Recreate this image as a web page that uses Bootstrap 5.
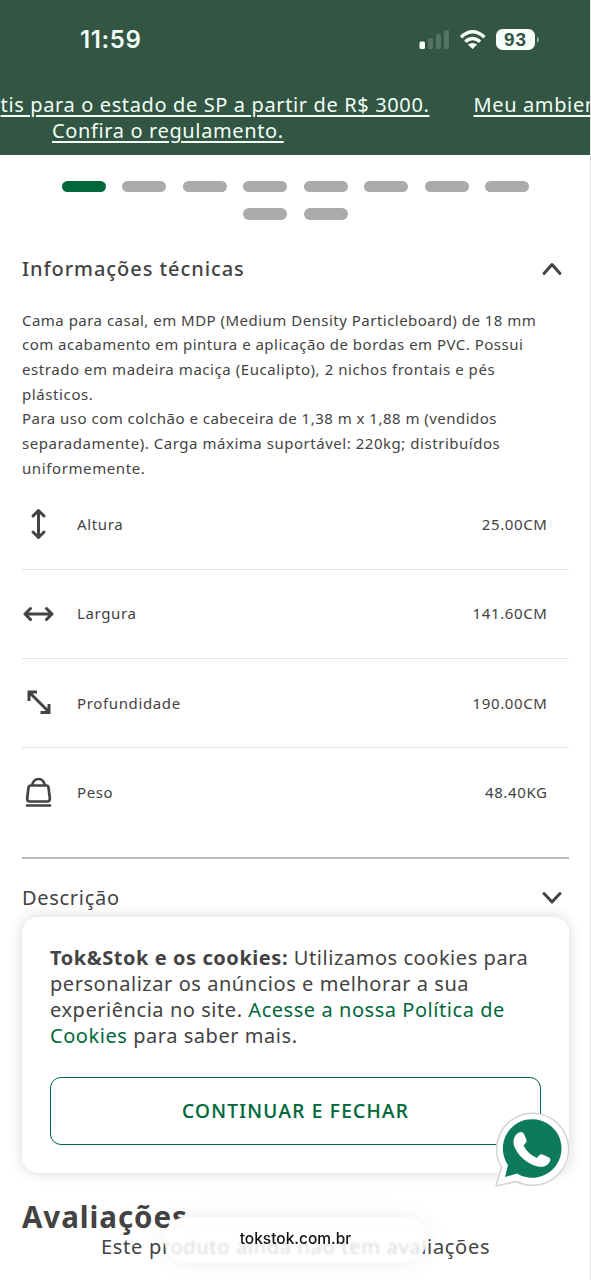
<!DOCTYPE html>
<html lang="pt-BR">
<head>
<meta charset="utf-8">
<meta name="viewport" content="width=device-width, initial-scale=1">
<title>Tok&amp;Stok</title>
<link href="https://cdn.jsdelivr.net/npm/bootstrap@5.3.0/dist/css/bootstrap.min.css" rel="stylesheet">
<style>
:root{--tk-green:#00683a;--tk-ink:#434343}
body{font-family:"Noto Sans","Liberation Sans",sans-serif;color:var(--tk-ink);width:591px;height:1280px;overflow:hidden;background:#fff}
.screen{width:591px;height:1280px;border-right:1px solid #e2e2e2}
.top{height:155px;background:#335543;color:#f1fff6}
.status{height:80px;font-family:Inter,sans-serif}
.status svg{margin-right:51px}
.clock{font-size:24px;font-weight:600;margin-left:80px;line-height:82px;letter-spacing:.6px}
.promo{font-size:20px;line-height:26px;white-space:nowrap}
.promo a{color:inherit;text-decoration:none;letter-spacing:.63px}
.promo .ln{width:max-content;text-decoration:underline;text-underline-offset:3px;text-decoration-thickness:1.5px}
.promo-ship{width:429.500px;flex:none}
.promo-next{margin-left:44px}
.dots{padding:25.5px 54px 0 55px;column-gap:16.45px;row-gap:16px}
.dots i{width:44px;height:11.5px;border-radius:6px;background:#ababab}
.dots i.on{background:var(--tk-green)}
.px{padding-left:22px;padding-right:21px}
.acc{font-size:20px;line-height:30px;padding-right:6px}
.acc-open{margin-top:34px}
.acc-open span{font-weight:500;letter-spacing:.93px}
.acc-closed{border-top:2px solid #bcbcbc;margin-top:20px;padding-top:24px;letter-spacing:.7px}
.body-text{font-size:15px;line-height:24.67px;white-space:nowrap;margin-top:24px;letter-spacing:.48px}
.ls-53{letter-spacing:.53px}
.ls-56{letter-spacing:.56px}
.ls-60{letter-spacing:.6px}
.spec{height:89.3px;border-bottom:1px solid #e3e3e3;font-size:15px;padding-right:21.4px;letter-spacing:.63px}
.spec svg{width:32px;height:32px;margin-right:23px}
.ln{display:block}
.cookie{left:22px;top:917px;width:547px;height:256px;border-radius:16px;background:#fff;box-shadow:0 0 14px rgba(0,0,0,.16);padding:27.5px 28px;z-index:2}
.cookie p{font-size:20px;line-height:26.1px;white-space:nowrap;letter-spacing:.55px}
.cookie a{color:var(--tk-green);text-decoration:none}
.cookie .btn{height:68.5px;border:1.5px solid var(--tk-green);border-radius:11px;color:var(--tk-green);font-size:19px;font-weight:500;margin-top:28px;letter-spacing:1.3px;-webkit-text-stroke:.2px}
.wa{left:494px;top:1110px;z-index:3}
.rate{left:22px;top:1196px;white-space:nowrap}
.rate h2{font-size:29.500px;line-height:42px;letter-spacing:.95px}
.rate p{font-size:20px;line-height:24px;padding-left:79px;letter-spacing:.7px;position:relative;top:-3px}
.pill{left:164px;top:1217px;width:263px;height:45px;border-radius:23px;background:linear-gradient(#fff 0,rgba(255,255,255,.97) 35%,rgba(255,255,255,.82) 60%);box-shadow:0 0 24px rgba(0,0,0,.07);font:500 15.5px/43px Inter,sans-serif;color:#111;z-index:3;backdrop-filter:blur(.8px)}
</style>
</head>
<body>
<div class="screen position-relative overflow-hidden">
<header class="top overflow-hidden">
  <div class="status d-flex align-items-center">
    <div class="clock">11:59</div>
    <svg class="ms-auto" width="120" height="26" viewBox="419 27 120 26">
      <g fill="#f6fff9"><rect x="419.500" y="41.500" width="5.500" height="7.500" rx="1.500"/><g opacity=".18"><rect x="428" y="38" width="5" height="11" rx="1.500"/><rect x="436" y="34" width="5" height="15" rx="1.500"/><rect x="444" y="30" width="5" height="19" rx="1.500"/></g>
      <rect x="496" y="29" width="39" height="21" rx="6.500"/><path d="M537 36.500q3.500 3 0 6.500z" opacity=".6"/><path d="M472.500 49l-4.700-4.400q4.700-3.400 9.400 0z"/></g>
      <g fill="none" stroke="#f6fff9" stroke-width="3.400"><path d="M461 37.200q11.500-10.800 23.500 0"/><path d="M465.300 41.700q7.200-6.500 14.800 0"/></g>
      <text x="515.500" y="46.200" text-anchor="middle" font-family="Liberation Sans" font-weight="700" font-size="19" letter-spacing="1" fill="#335543">93</text>
    </svg>
  </div>
  <div class="promo d-flex mt-2 pt-1">
    <a href="#" class="promo-ship d-flex flex-column"><span class="ln align-self-end">tis para o estado de SP a partir de R$ 3000.</span><span class="ln align-self-start ms-5 ps-1">Confira o regulamento.</span></a>
    <a href="#" class="promo-next"><span class="ln">Meu ambiente</span></a>
  </div>
</header>
<div class="dots d-flex flex-wrap justify-content-center"><i class="on"></i><i></i><i></i><i></i><i></i><i></i><i></i><i></i><i></i><i></i></div>
<main class="px">
  <div class="acc acc-open d-flex align-items-center justify-content-between">
    <span>Informações técnicas</span>
    <svg width="22" height="16" viewBox="0 0 22 16" fill="none" stroke="currentColor" stroke-width="3" stroke-linecap="round" stroke-linejoin="round"><path d="M3 12.500l8-9 8 9"/></svg>
  </div>
  <div class="body-text">
    <span class="ln">Cama para casal, em MDP (Medium Density Particleboard) de 18 mm</span>
    <span class="ln">com acabamento em pintura e aplicação de bordas em PVC. Possui</span>
    <span class="ln ls-56">estrado em madeira maciça (Eucalipto), 2 nichos frontais e pés</span>
    <span class="ln ls-60">plásticos.</span>
    <span class="ln">Para uso com colchão e cabeceira de 1,38 m x 1,88 m (vendidos</span>
    <span class="ln ls-53">separadamente). Carga máxima suportável: 220kg; distribuídos</span>
    <span class="ln ls-60">uniformemente.</span>
  </div>
  <div class="specs">
    <div class="spec d-flex align-items-center"><svg viewBox="0 0 32 32" fill="none" stroke="currentColor" stroke-width="3" stroke-linecap="round" stroke-linejoin="round"><path d="M16.500 2.500v27M11 8l5.500-5.500L22 8M11 24l5.500 5.500L22 24"/></svg><span>Altura</span><span class="ms-auto">25.00CM</span></div>
    <div class="spec d-flex align-items-center"><svg viewBox="0 0 32 32" fill="none" stroke="currentColor" stroke-width="3" stroke-linecap="round" stroke-linejoin="round"><path d="M3 16h27M8.500 10.500L3 16l5.500 5.500M24.500 10.500L30 16l-5.500 5.500"/></svg><span>Largura</span><span class="ms-auto">141.60CM</span></div>
    <div class="spec d-flex align-items-center"><svg viewBox="0 0 32 32" fill="none" stroke="currentColor" stroke-width="3"><path d="M7.500 5.500l19 19M7 14V5H15M18.500 25.500h8.500V17"/></svg><span>Profundidade</span><span class="ms-auto">190.00CM</span></div>
    <div class="spec d-flex align-items-center border-0"><svg viewBox="0 0 32 32" fill="none" stroke="currentColor" stroke-width="2.700" stroke-linecap="round" stroke-linejoin="round"><path d="M8.500 8.500h16q1.500 0 2 2l1.300 10.500q.3 3.500-2.500 3.500h-17.600Q4.900 24.500 5.200 21l1.300-10.500q.5-2 2-2zM10 8.500q1.500-6.500 6.500-6.500t6.500 6.500M5 28.500h23"/></svg><span>Peso</span><span class="ms-auto">48.40KG</span></div>
  </div>
  <div class="acc acc-closed d-flex align-items-center justify-content-between">
    <span>Descrição</span>
    <svg width="22" height="16" viewBox="0 0 22 16" fill="none" stroke="currentColor" stroke-width="3" stroke-linecap="round" stroke-linejoin="round"><path d="M3 3.500l8 8.500 8-8.500"/></svg>
  </div>
</main>
<section class="rate position-absolute">
  <h2 class="fw-bold m-0">Avaliações</h2>
  <p class="m-0">Este produto ainda não tem avaliações</p>
</section>
<aside class="cookie position-absolute">
  <p class="m-0"><span class="ln"><b>Tok&amp;Stok e os cookies:</b> Utilizamos cookies para</span><span class="ln">personalizar os anúncios e melhorar a sua</span><span class="ln">experiência no site. <a href="#">Acesse a nossa Política de</a></span><span class="ln"><a href="#">Cookies</a> para saber mais.</span></p>
  <button class="btn w-100 p-0" type="button">CONTINUAR E FECHAR</button>
</aside>
<svg class="wa position-absolute" width="77" height="78" viewBox="494 1110 77 78">
  <path d="M496 1186l5.500-18.500a36 36 0 1 1 15 14z" fill="#fff" stroke="#d3d3d3" stroke-width="1.500" stroke-linejoin="round"/>
  <path d="M505 1177l3-12a29.300 29.300 0 1 1 9 8.500z" fill="#0c7a5b"/>
  <path d="M518 1133c3-2 5-1 6 1l2.500 6c.5 2-1 3.500-3 5.500 3 6 7.500 10 13.500 12.500 2-2.500 3.500-4.500 5.500-3.500l6.500 3c2 1 1.500 3.500 0 5.500-4 5-10 4.500-16 2-9-4-15.500-11-18.500-18-2-5-1-11 3.500-14z" fill="#fff"/>
</svg>
<div class="pill position-absolute text-center">tokstok.com.br</div>
</div>
<script src="https://cdn.jsdelivr.net/npm/bootstrap@5.3.0/dist/js/bootstrap.bundle.min.js"></script>
</body>
</html>
